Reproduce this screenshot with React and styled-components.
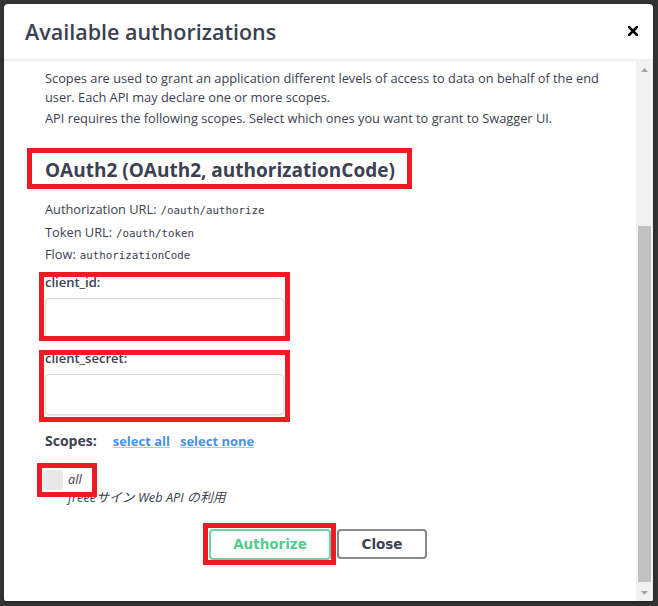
import React from "react";
import styled, { createGlobalStyle } from "styled-components";

const GlobalStyle = createGlobalStyle`
  html, body {
    margin: 0;
    padding: 0;
    background: #333333;
  }
  body {
    font-family: "Open Sans", "Noto Sans CJK JP", sans-serif;
    color: #3b4151;
  }
`;

const Backdrop = styled.div`
  width: 658px;
  height: 606px;
  padding: 4px 0 0 4px;
  box-sizing: border-box;
  background: #333333;
`;

const Modal = styled.div`
  width: 649px;
  height: 597px;
  background: #ffffff;
  border-radius: 4px 4px 2px 2px;
  box-shadow: 0 1px 3px rgba(0, 0, 0, 0.4);
  display: flex;
  flex-direction: column;
  overflow: hidden;
`;

const Header = styled.div`
  height: 55px;
  flex: none;
  display: flex;
  align-items: center;
  justify-content: space-between;
  padding: 0 15px 0 21px;
  border-bottom: 2px solid #eeeeee;
`;

const Title = styled.h3`
  margin: 0;
  font-size: 21.5px;
  font-weight: 600;
  color: #3b4151;
`;

const CloseX = styled.button`
  border: 0;
  background: none;
  padding: 0;
  width: 10px;
  height: 10px;
  display: flex;
  margin-top: -2px;
`;

const Body = styled.div`
  flex: 1;
  display: flex;
  min-height: 0;
`;

const Content = styled.div`
  flex: 1;
  padding: 8px 0 0 41px;
  display: flex;
  flex-direction: column;
  align-items: flex-start;
`;

const Para = styled.p`
  margin: 0 0 ${(p) => p.$gap || 0}px;
  font-size: 12.8px;
  line-height: 19px;
  max-width: 560px;
`;

/* red annotation frame drawn over the content */
const Marked = styled.div`
  position: relative;
  &::after {
    content: "";
    position: absolute;
    top: ${(p) => p.$t}px;
    right: ${(p) => p.$r}px;
    bottom: ${(p) => p.$b}px;
    left: ${(p) => p.$l}px;
    border: 5px solid #ed1c24;
    pointer-events: none;
  }
`;

const FlowTitle = styled.h4`
  margin: 0;
  font-size: 19px;
  line-height: 24px;
  font-weight: 700;
  color: #3b4151;
`;

const InfoList = styled.div`
  margin-top: 16px;
  display: flex;
  flex-direction: column;
`;

const InfoLine = styled.p`
  margin: 0;
  height: 22.5px;
  display: flex;
  align-items: baseline;
  font-size: 12.8px;
  line-height: 22.5px;
`;

const Code = styled.code`
  font-family: "DejaVu Sans Mono", "Liberation Mono", monospace;
  font-size: 10.8px;
  line-height: 1;
  margin-left: 4px;
`;

const Field = styled(Marked)`
  width: 239px;
  margin-top: ${(p) => p.$mt}px;
  display: flex;
  flex-direction: column;
`;

const Label = styled.label`
  font-size: 13px;
  line-height: 18px;
  font-weight: 600;
  color: #3b4151;
`;

const Input = styled.input`
  margin-top: 7px;
  height: 41px;
  box-sizing: border-box;
  width: 100%;
  border: 1px solid #d9d9d9;
  border-radius: 4px;
  box-shadow: 0 1px 2px rgba(0, 0, 0, 0.1);
  background: #ffffff;
  padding: 8px 10px;
`;

const ScopesRow = styled.div`
  margin-top: 16px;
  display: flex;
  align-items: baseline;
  gap: 10px;
  line-height: 20px;
`;

const ScopesLabel = styled.span`
  font-size: 14px;
  font-weight: 700;
  margin-right: 6px;
`;

const Link = styled.a`
  font-size: 13px;
  font-weight: 700;
  color: #4990e2;
  text-decoration: underline;
  text-decoration-color: #a9c9f0;
  cursor: pointer;
`;

const ScopeItem = styled.div`
  margin-top: 19px;
  display: flex;
  align-items: flex-start;
  gap: 7px;
`;

const Check = styled(Marked)`
  width: 16px;
  height: 16px;
  margin-top: 2px;
  border-radius: 2px;
  background: #e8e8e8;
  box-shadow: 0 0 0 2px #e8e8e8;
  flex: none;
`;

const ScopeText = styled.div`
  display: flex;
  flex-direction: column;
  font-size: 12.8px;
  line-height: 18px;
  font-style: italic;
`;

const ButtonRow = styled.div`
  align-self: stretch;
  margin-top: 23px;
  padding-right: 45px;
  display: flex;
  justify-content: center;
  align-items: center;
  gap: 6px;
`;

const Btn = styled.button`
  font-family: "DejaVu Sans", Verdana, sans-serif;
  font-size: 13.5px;
  font-weight: 700;
  height: ${(p) => p.$h}px;
  padding: 0;
  border-radius: 4px;
  background: #ffffff;
  border: 2px solid ${(p) => (p.$primary ? "#6fd3a1" : "#888888")};
  color: ${(p) => (p.$primary ? "#55cc8e" : "#3b4151")};
  width: ${(p) => p.$w}px;
`;

const Scrollbar = styled.div`
  width: 17px;
  flex: none;
  background: #f1f1f1;
  display: flex;
  flex-direction: column;
`;

const ArrowBox = styled.div`
  height: 17px;
  flex: none;
  display: flex;
  align-items: center;
  justify-content: center;
`;

const Track = styled.div`
  flex: 1;
  display: flex;
  flex-direction: column;
  justify-content: flex-end;
  align-items: center;
  padding-bottom: 2px;
`;

const Thumb = styled.div`
  width: 13px;
  height: 356px;
  background: #c1c1c1;
`;

function Arrow({ up }) {
  return (
    <svg width="7" height="4" viewBox="0 0 7 4">
      <path d={up ? "M0 4 L3.5 0 L7 4 Z" : "M0 0 L7 0 L3.5 4 Z"} fill={up ? "#a3a3a3" : "#a8a8a8"} />
    </svg>
  );
}

export default function App() {
  return (
    <>
      <GlobalStyle />
      <Backdrop>
        <Modal>
          <Header>
            <Title>Available authorizations</Title>
            <CloseX aria-label="Close">
              <svg width="10" height="10" viewBox="0 0 10 10">
                <path d="M1 1 L9 9 M9 1 L1 9" stroke="#000" strokeWidth="2.6" strokeLinecap="square" />
              </svg>
            </CloseX>
          </Header>
          <Body>
            <Content>
              <Para $gap={2}>
                Scopes are used to grant an application different levels of access to data on behalf of the end
                user. Each API may declare one or more scopes.
              </Para>
              <Para>API requires the following scopes. Select which ones you want to grant to Swagger UI.</Para>

              <Marked $t={-10} $r={-17} $b={-7} $l={-18} style={{ marginTop: 30 }}>
                <FlowTitle>OAuth2 (OAuth2, authorizationCode)</FlowTitle>
              </Marked>

              <InfoList>
                <InfoLine>
                  Authorization URL:<Code>/oauth/authorize</Code>
                </InfoLine>
                <InfoLine>
                  Token URL:<Code>/oauth/token</Code>
                </InfoLine>
                <InfoLine>
                  Flow:<Code>authorizationCode</Code>
                </InfoLine>
              </InfoList>

              <Field $mt={7} $t={-1} $r={-6} $b={-2} $l={-6}>
                <Label htmlFor="client_id">client_id:</Label>
                <Input id="client_id" type="text" />
              </Field>

              <Field $mt={10} $t={1} $r={-6} $b={-7} $l={-6}>
                <Label htmlFor="client_secret">client_secret:</Label>
                <Input id="client_secret" type="password" />
              </Field>

              <ScopesRow>
                <ScopesLabel>Scopes:</ScopesLabel>
                <Link>select all</Link>
                <Link>select none</Link>
              </ScopesRow>

              <ScopeItem>
                <Check $t={-9} $r={-36} $b={-9} $l={-8} />
                <ScopeText>
                  <span>all</span>
                  <span>freeeサイン Web API の利用</span>
                </ScopeText>
              </ScopeItem>

              <ButtonRow>
                <Marked $t={-6} $r={-5} $b={-5} $l={-6}>
                  <Btn $primary $h={31} $w={122}>Authorize</Btn>
                </Marked>
                <Btn $h={30} $w={90}>Close</Btn>
              </ButtonRow>
            </Content>
            <Scrollbar>
              <ArrowBox>
                <Arrow up />
              </ArrowBox>
              <Track>
                <Thumb />
              </Track>
              <ArrowBox>
                <Arrow />
              </ArrowBox>
            </Scrollbar>
          </Body>
        </Modal>
      </Backdrop>
    </>
  );
}
